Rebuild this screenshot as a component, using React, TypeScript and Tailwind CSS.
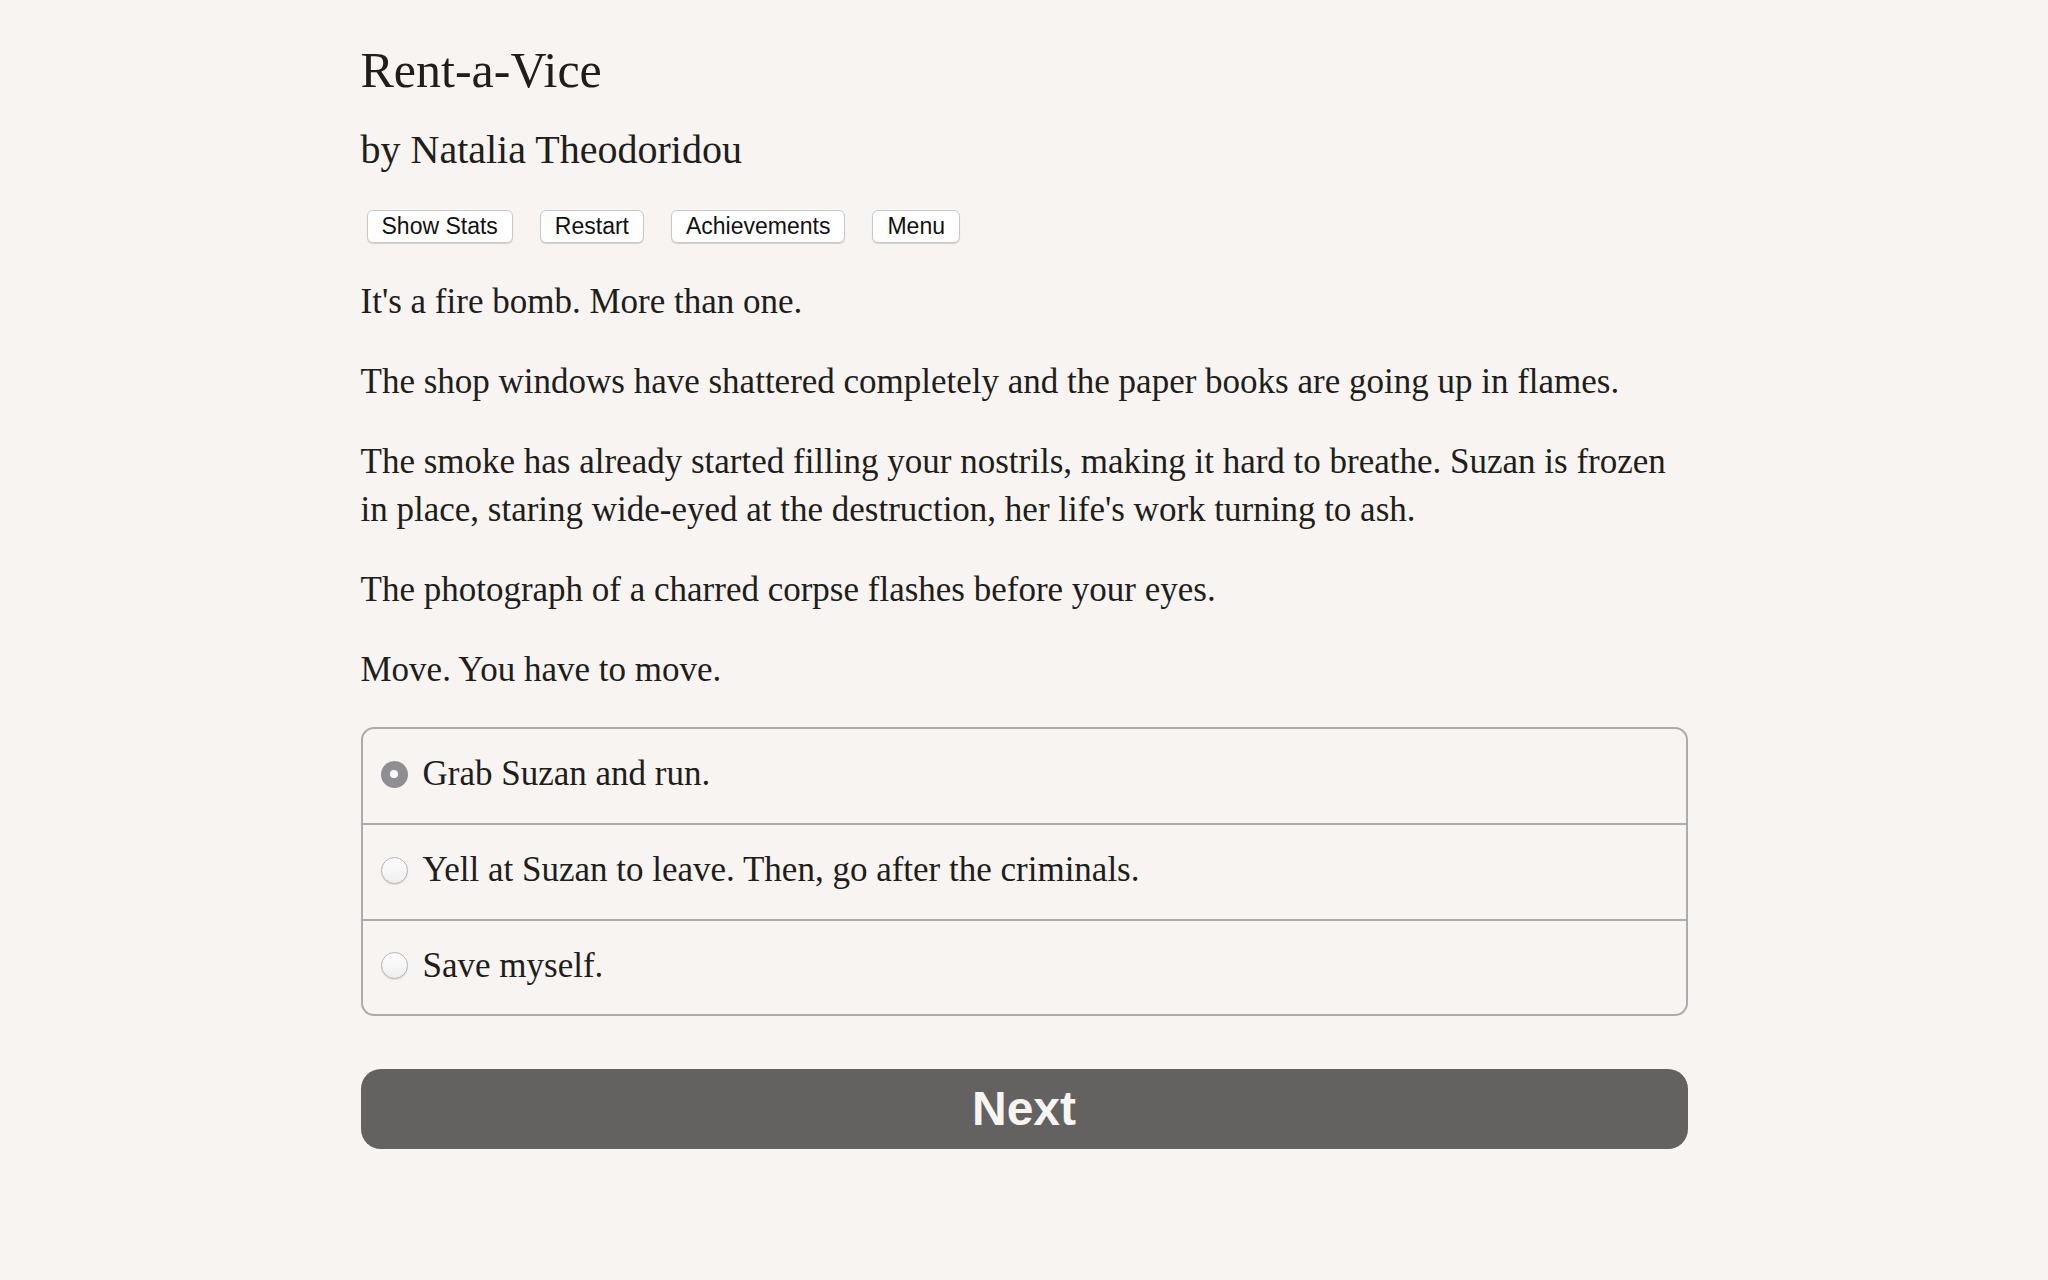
import React from "react";

const serif = "font-['Liberation_Serif','Times_New_Roman',serif]";
const sans = "font-['Liberation_Sans',Arial,sans-serif]";

function TopButton({ label }: { label: string }) {
  return (
    <button
      className={`${sans} h-[33px] rounded-[6px] border border-[#c9c9c9] bg-white px-[14px] text-[23px] leading-none text-[#111] shadow-[0_1px_1px_rgba(0,0,0,0.15)]`}
    >
      {label}
    </button>
  );
}

function Radio({ checked }: { checked?: boolean }) {
  if (checked) {
    return (
      <span className="flex h-[27px] w-[27px] shrink-0 items-center justify-center rounded-full bg-[#8f8e93]">
        <span className="h-[8px] w-[8px] rounded-full bg-white" />
      </span>
    );
  }
  return (
    <span className="h-[27px] w-[27px] shrink-0 rounded-full border border-[#b4b4b4] bg-gradient-to-b from-white to-[#eeeeee] shadow-[0_1px_1px_rgba(0,0,0,0.12)]" />
  );
}

function Choice({ text, checked, h, last }: { text: string; checked?: boolean; h: string; last?: boolean }) {
  return (
    <div
      className={`flex ${h} items-center gap-[15px] pl-[18px] pb-[4px] ${
        last ? "" : "border-b-2 border-[#a9abae]"
      }`}
    >
      <Radio checked={checked} />
      <span className="text-[35px] leading-[48px]">{text}</span>
    </div>
  );
}

export default function App() {
  return (
    <div className={`min-h-[1280px] w-full bg-[#f7f4f1] text-[#211d1a] ${serif}`}>
      <div className="mx-auto w-[1327px] pt-[41px]">
        <h1 className="text-[50px] font-normal leading-[58px]">Rent-a-Vice</h1>
        <h2 className="mt-[27px] text-[40px] font-normal leading-[48px]">by Natalia Theodoridou</h2>
        <div className="mt-[36px] flex gap-[27px] pl-[6px]">
          <TopButton label="Show Stats" />
          <TopButton label="Restart" />
          <TopButton label="Achievements" />
          <TopButton label="Menu" />
        </div>
        <div className="mt-[35px] flex flex-col gap-[32px] text-[35px] leading-[48px]">
          <p>It's a fire bomb. More than one.</p>
          <p>The shop windows have shattered completely and the paper books are going up in flames.</p>
          <p>
            The smoke has already started filling your nostrils, making it hard to breathe. Suzan is frozen
            <br />
            in place, staring wide-eyed at the destruction, her life's work turning to ash.
          </p>
          <p>The photograph of a charred corpse flashes before your eyes.</p>
          <p>Move. You have to move.</p>
        </div>
        <div className="mt-[33px] overflow-hidden rounded-[13px] border-2 border-[#a9abae]">
          <Choice text="Grab Suzan and run." checked h="h-[96px]" />
          <Choice text="Yell at Suzan to leave. Then, go after the criminals." h="h-[96px]" />
          <Choice text="Save myself." h="h-[93px]" last />
        </div>
        <button
          className={`${sans} mt-[53px] flex h-[80px] w-full items-center justify-center rounded-[20px] bg-[#636261] text-[48px] font-bold text-[#f7f4f1]`}
        >
          Next
        </button>
      </div>
    </div>
  );
}
